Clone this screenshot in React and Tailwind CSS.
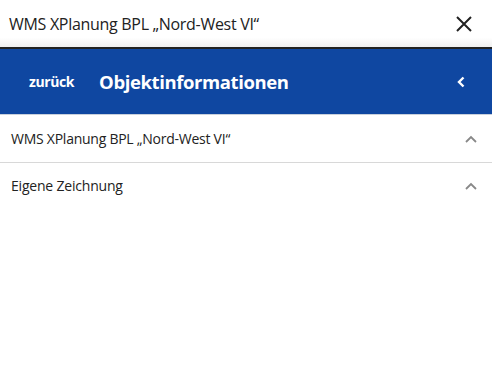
import React from 'react';

export default function App() {
  const sections = ['WMS XPlanung BPL \u201eNord-West VI\u201c', 'Eigene Zeichnung'];

  return (
    <div className="w-[492px] h-[367px] bg-white overflow-hidden" style={{ fontFamily: '"Open Sans", "Noto Sans", sans-serif' }}>
      {/* window title */}
      <div className="h-[47px] flex items-center justify-between pl-[9px] pr-[19px] bg-gradient-to-b from-white from-80% to-[#f0f0f0]">
        <span className="text-[16px] text-[#222] tracking-[-0.3px]">WMS XPlanung BPL „Nord-West VI“</span>
        <svg width="18" height="18" viewBox="0 0 18 18" className="text-[#222]">
          <path d="M2 2 L16 16 M16 2 L2 16" stroke="currentColor" strokeWidth="2" />
        </svg>
      </div>
      <div className="h-[2px] bg-[#222]" />

      {/* blue header */}
      <div className="h-[66px] bg-[#0f47a1] flex items-center pl-[29px] pr-[26px] border-b border-[#c8d0dc]">
        <span className="text-[14px] font-bold text-white tracking-[-0.4px]">zurück</span>
        <span className="ml-[25px] text-[18.5px] font-bold text-white tracking-[-0.4px]">Objektinformationen</span>
        <svg width="10" height="12" viewBox="0 0 10 12" className="ml-auto">
          <path d="M7.5 1.5 L3 6 L7.5 10.5" stroke="white" strokeWidth="2.4" fill="none" />
        </svg>
      </div>

      {/* sections */}
      <div className="h-[48px] flex items-center justify-between pl-[11px] pr-[14px] border-b border-[#d8d8d8]">
        <span className="text-[14px] text-[#222] tracking-[-0.25px]">{sections[0]}</span>
        <svg width="14" height="8" viewBox="0 0 14 8">
          <path d="M2 7 L7 2 L12 7" stroke="#888" strokeWidth="1.8" fill="none" />
        </svg>
      </div>
      <div className="h-[45px] flex items-center justify-between pl-[11px] pr-[14px]">
        <span className="text-[14px] text-[#222] tracking-[-0.2px]">{sections[1]}</span>
        <svg width="14" height="8" viewBox="0 0 14 8">
          <path d="M2 7 L7 2 L12 7" stroke="#888" strokeWidth="1.8" fill="none" />
        </svg>
      </div>
    </div>
  );
}
